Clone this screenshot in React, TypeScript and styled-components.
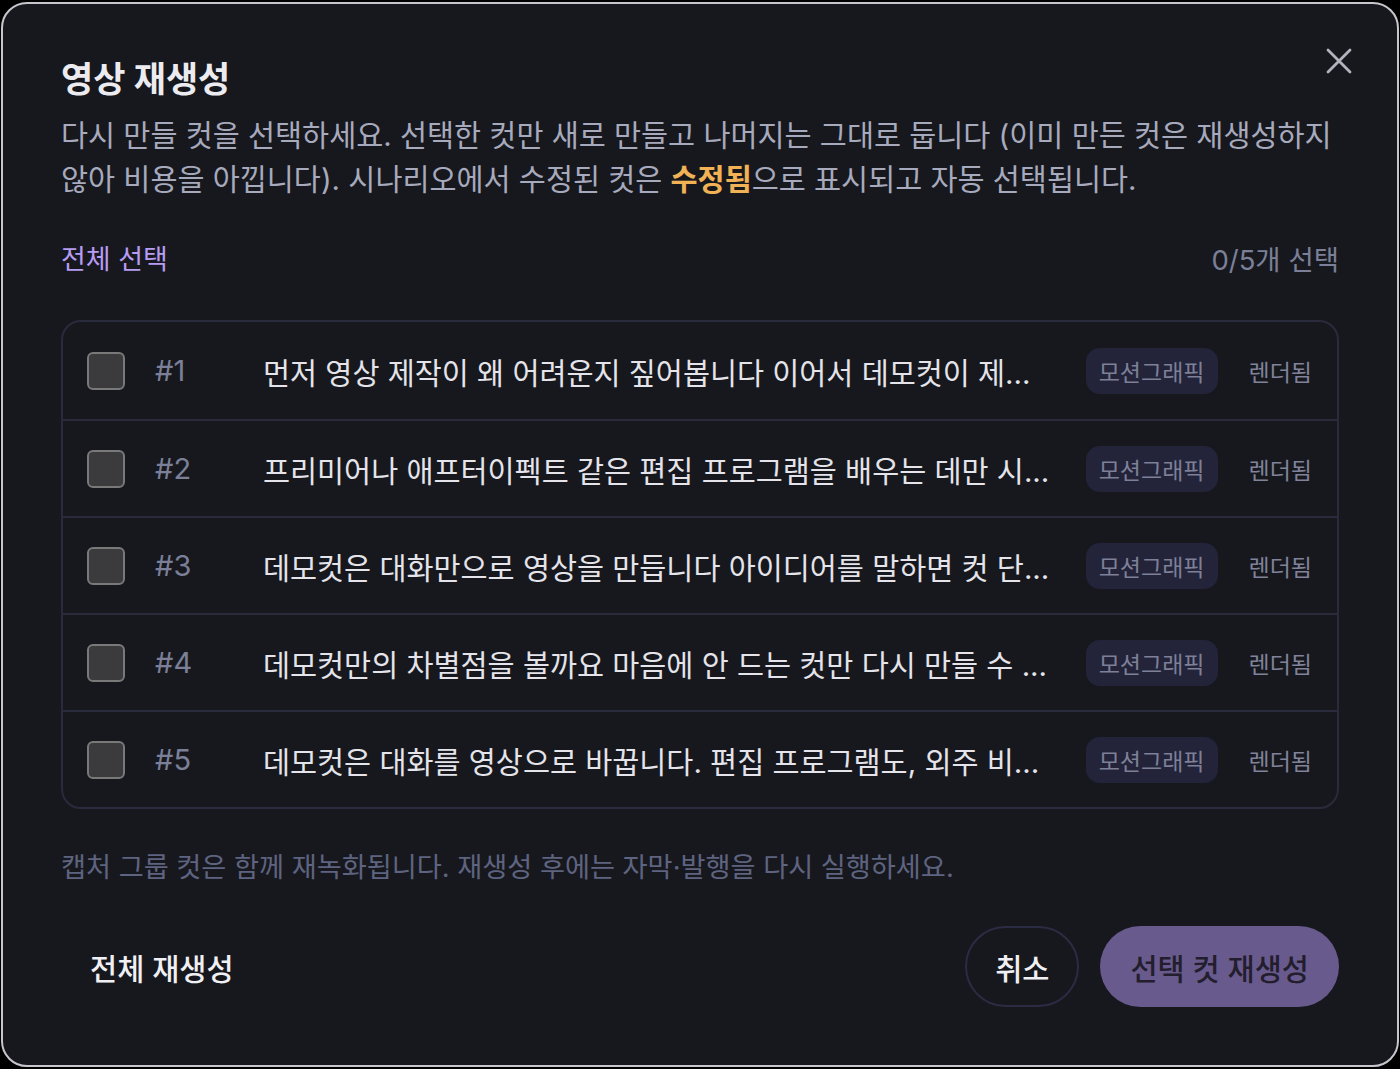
import React from 'react';
import styled, { createGlobalStyle } from 'styled-components';

const GlobalStyle = createGlobalStyle`
  * { box-sizing: border-box; }
  html, body {
    margin: 0;
    padding: 0;
    background: #000;
  }
  body {
    font-family: Inter, "Noto Sans CJK KR", "Noto Sans", sans-serif;
    -webkit-font-smoothing: antialiased;
  }
`;

const colors = {
  panel: '#17181e',
  line: '#2a2a3d',
  title: '#ececf0',
  body: '#a7aabd',
  muted: '#7b8098',
  faint: '#5e6480',
  accent: '#b79cf3',
  warn: '#f0b255',
};

const Dialog = styled.div`
  position: relative;
  width: 1398px;
  height: 1065px;
  margin: 2px 1px;
  padding: 52px 58px 58px;
  border: 2px solid #c6c6cc;
  border-radius: 26px;
  background-color: ${colors.panel};

  display: flex;
  flex-direction: column;
`;

const CloseButton = styled.button`
  position: absolute;
  top: 40px;
  right: 41px;
  width: 34px;
  height: 34px;
  padding: 0;
  border: none;
  background: none;
  color: #b3b3bd;
  cursor: pointer;

  display: flex;
  align-items: center;
  justify-content: center;
`;

const Title = styled.h2`
  margin: 0;
  font-size: 35px;
  line-height: 46px;
  font-weight: 700;
  color: ${colors.title};
`;

const Description = styled.p`
  margin: 12px 0 0;
  font-size: 29.4px;
  line-height: 44px;
  color: ${colors.body};

  strong {
    color: ${colors.warn};
    font-weight: 600;
  }
`;

const SelectBar = styled.div`
  margin-top: 40px;
  display: flex;
  align-items: center;
  justify-content: space-between;
  font-size: 27px;
  line-height: 36px;
`;

const TextButton = styled.button`
  padding: 0;
  border: none;
  background: none;
  font: inherit;
  color: ${colors.accent};
  cursor: pointer;
`;

const Counter = styled.span`
  font-size: 27.5px;
  color: ${colors.muted};
`;

const ShotList = styled.div`
  margin-top: 42px;
  border: 2px solid ${colors.line};
  border-radius: 20px;
  overflow: hidden;
`;

const ShotRow = styled.div`
  height: 97px;
  padding: 0 25px 0 24px;
  display: flex;
  align-items: center;

  & + & {
    border-top: 2px solid ${colors.line};
  }
`;

const CheckBox = styled.span`
  flex: none;
  width: 38px;
  height: 38px;
  margin-right: 30px;
  border: 2px solid #797979;
  border-radius: 6px;
  background-color: #3b3b3d;
`;

const ShotNumber = styled.span`
  flex: none;
  width: 108px;
  font-size: 29px;
  color: ${colors.muted};
`;

const ShotText = styled.span`
  flex: 1;
  min-width: 0;
  font-size: 29.4px;
  color: #e4e4ea;
  white-space: nowrap;
  overflow: hidden;
`;

const Tag = styled.span`
  flex: none;
  height: 46px;
  padding: 0 13px;
  border-radius: 14px;
  background-color: #23243a;
  color: #7d8097;
  font-size: 23px;
  display: flex;
  align-items: center;
`;

const Status = styled.span`
  flex: none;
  margin-left: 31px;
  font-size: 23px;
  color: #80839a;
`;

const Note = styled.p`
  margin: 41px 0 0;
  font-size: 27.2px;
  line-height: 36px;
  color: ${colors.faint};
`;

const Footer = styled.div`
  margin-top: auto;
  display: flex;
  align-items: center;
  gap: 21px;
`;

const Button = styled.button<{ $variant: 'ghost' | 'outline' | 'primary' }>`
  height: 81px;
  padding: 0 ${(p) => (p.$variant === 'ghost' ? 27 : 28)}px;
  border-radius: 41px;
  font-family: inherit;
  font-size: 29.5px;
  font-weight: 500;
  cursor: pointer;

  border: 2px solid
    ${(p) => (p.$variant === 'outline' ? '#2b2b43' : 'transparent')};
  background-color: ${(p) =>
    p.$variant === 'primary' ? '#695a8d' : 'transparent'};
  color: ${(p) => (p.$variant === 'primary' ? '#221e2e' : '#f0f0f4')};

  &:first-child {
    margin-right: auto;
  }
`;

const shots = [
  '먼저 영상 제작이 왜 어려운지 짚어봅니다 이어서 데모컷이 제...',
  '프리미어나 애프터이펙트 같은 편집 프로그램을 배우는 데만 시...',
  '데모컷은 대화만으로 영상을 만듭니다 아이디어를 말하면 컷 단...',
  '데모컷만의 차별점을 볼까요 마음에 안 드는 컷만 다시 만들 수 ...',
  '데모컷은 대화를 영상으로 바꿉니다. 편집 프로그램도, 외주 비...',
];

const App = () => {
  return (
    <>
      <GlobalStyle />
      <Dialog>
        <CloseButton aria-label="닫기">
          <svg width="26" height="26" viewBox="0 0 26 26" fill="none">
            <path
              d="M2 2L24 24M24 2L2 24"
              stroke="currentColor"
              strokeWidth="2.8"
              strokeLinecap="round"
            />
          </svg>
        </CloseButton>

        <Title>영상 재생성</Title>
        <Description>
          다시 만들 컷을 선택하세요. 선택한 컷만 새로 만들고 나머지는 그대로
          둡니다 (이미 만든 컷은 재생성하지 않아 비용을 아낍니다). 시나리오에서
          수정된 컷은 <strong>수정됨</strong>으로 표시되고 자동 선택됩니다.
        </Description>

        <SelectBar>
          <TextButton>전체 선택</TextButton>
          <Counter>0/5개 선택</Counter>
        </SelectBar>

        <ShotList>
          {shots.map((text, i) => (
            <ShotRow key={i}>
              <CheckBox />
              <ShotNumber>#{i + 1}</ShotNumber>
              <ShotText>{text}</ShotText>
              <Tag>모션그래픽</Tag>
              <Status>렌더됨</Status>
            </ShotRow>
          ))}
        </ShotList>

        <Note>
          캡처 그룹 컷은 함께 재녹화됩니다. 재생성 후에는 자막·발행을 다시
          실행하세요.
        </Note>

        <Footer>
          <Button $variant="ghost">전체 재생성</Button>
          <Button $variant="outline">취소</Button>
          <Button $variant="primary">선택 컷 재생성</Button>
        </Footer>
      </Dialog>
    </>
  );
};

export default App;
